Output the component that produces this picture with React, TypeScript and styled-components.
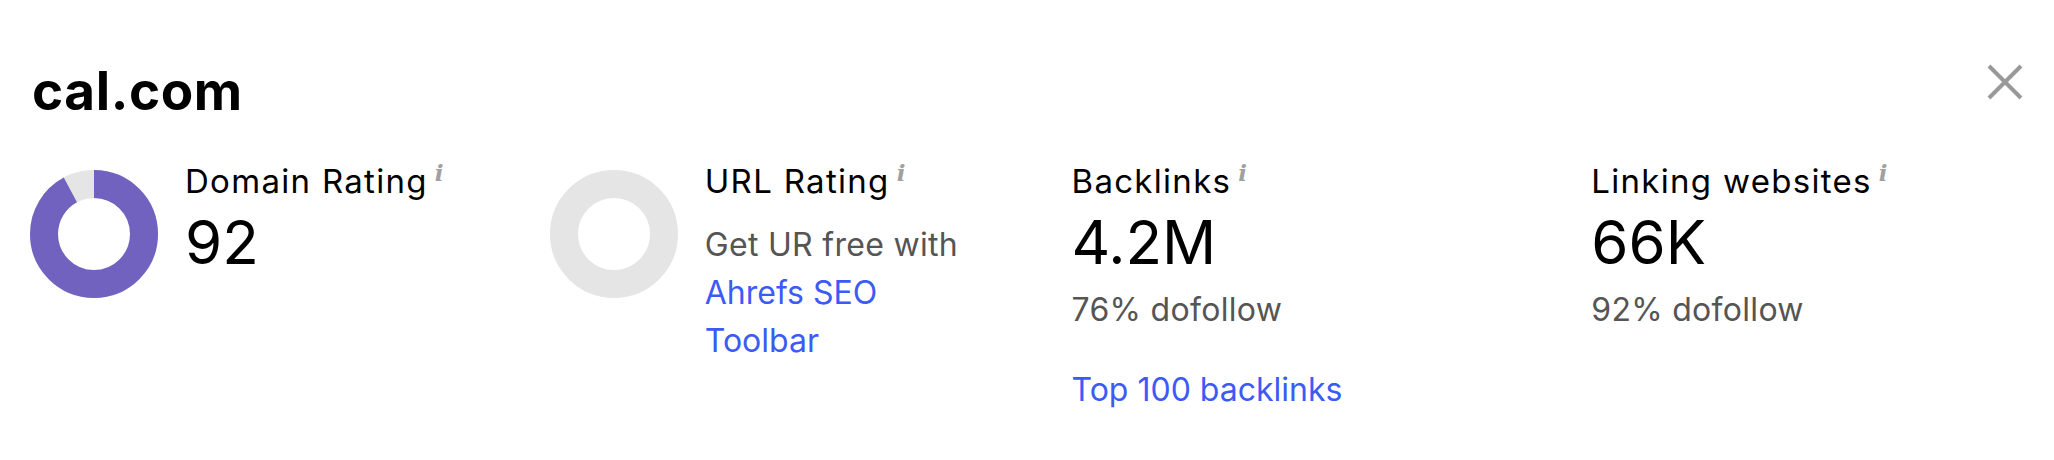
import React from "react";
import styled, { createGlobalStyle } from "styled-components";

const Global = createGlobalStyle`
  html, body { margin: 0; padding: 0; background: #fff; }
  body { font-family: Inter, "Noto Sans", sans-serif; color: #000; }
`;

const Panel = styled.div`
  width: 2054px;
  height: 460px;
  box-sizing: border-box;
  padding: 59px 31px 0 30px;
  display: flex;
  flex-direction: column;
`;

const Header = styled.div`
  display: flex;
  justify-content: space-between;
  align-items: flex-start;
`;

const Title = styled.h1`
  margin: 0 0 0 2px;
  font-size: 53px;
  line-height: 64px;
  font-weight: 700;
  letter-spacing: 0.6px;
`;

const Close = styled.button`
  border: 0;
  background: none;
  padding: 0;
  margin-top: 5px;
  width: 36px;
  height: 36px;
  cursor: pointer;
  display: flex;
`;

const Grid = styled.div`
  margin-top: 38px;
  display: grid;
  grid-template-columns: repeat(4, 1fr);
  column-gap: 86px;
`;

const Metric = styled.div`
  display: flex;
  align-items: flex-start;
  gap: 25px;
`;

const DonutBox = styled.svg`
  flex-shrink: 0;
  margin-top: 9px;
`;

const Body = styled.div`
  display: flex;
  flex-direction: column;
  padding-left: 2px;
`;

const Label = styled.div`
  font-size: 33px;
  line-height: 40px;
  letter-spacing: 1.3px;
  display: flex;
  align-items: flex-start;
  white-space: nowrap;
`;

const Info = styled.span`
  font-family: "DejaVu Serif", "Liberation Serif", serif;
  font-style: italic;
  font-weight: 600;
  font-size: 23px;
  line-height: 24px;
  color: #a0a0a0;
  margin-left: 7px;
  letter-spacing: 0;
`;

const Value = styled.div`
  margin-top: 11px;
  font-size: 60px;
  line-height: 60px;
`;

const Sub = styled.div<{ $top: number }>`
  margin-top: ${(p) => p.$top}px;
  font-size: 32px;
  line-height: 48px;
  letter-spacing: 0.3px;
  color: #555;
`;

const Link = styled.a<{ $top?: number }>`
  margin-top: ${(p) => p.$top ?? 0}px;
  font-size: 32px;
  line-height: 48px;
  color: #3c5bf6;
  text-decoration: none;
`;

const Donut = ({ value }: { value: number | null }) => {
  const r = 50;
  const c = 2 * Math.PI * r;
  return (
    <DonutBox width="128" height="128" viewBox="0 0 128 128">
      <circle cx="64" cy="64" r={r} fill="none" stroke="#e5e5e5" strokeWidth="28" />
      {value !== null && (
        <circle
          cx="64"
          cy="64"
          r={r}
          fill="none"
          stroke="#7262bf"
          strokeWidth="28"
          strokeDasharray={`${(c * value) / 100} ${c}`}
          transform="rotate(-90 64 64)"
        />
      )}
    </DonutBox>
  );
};

export default function App() {
  return (
    <>
      <Global />
      <Panel>
        <Header>
          <Title>cal.com</Title>
          <Close aria-label="Close">
            <svg width="36" height="36" viewBox="0 0 36 36">
              <path d="M2 2 L34 34 M34 2 L2 34" stroke="#999" strokeWidth="4" />
            </svg>
          </Close>
        </Header>
        <Grid>
          <Metric>
            <Donut value={92} />
            <Body>
              <Label>
                Domain Rating<Info>i</Info>
              </Label>
              <Value>92</Value>
            </Body>
          </Metric>
          <Metric>
            <Donut value={null} />
            <Body>
              <Label>
                URL Rating<Info>i</Info>
              </Label>
              <Sub $top={20}>Get UR free with</Sub>
              <Link href="#">Ahrefs SEO</Link>
              <Link href="#">Toolbar</Link>
            </Body>
          </Metric>
          <Body>
            <Label>
              Backlinks<Info>i</Info>
            </Label>
            <Value>4.2M</Value>
            <Sub $top={14}>76% dofollow</Sub>
            <Link href="#" $top={32}>
              Top 100 backlinks
            </Link>
          </Body>
          <Body>
            <Label>
              Linking websites<Info>i</Info>
            </Label>
            <Value>66K</Value>
            <Sub $top={14}>92% dofollow</Sub>
          </Body>
        </Grid>
      </Panel>
    </>
  );
}
